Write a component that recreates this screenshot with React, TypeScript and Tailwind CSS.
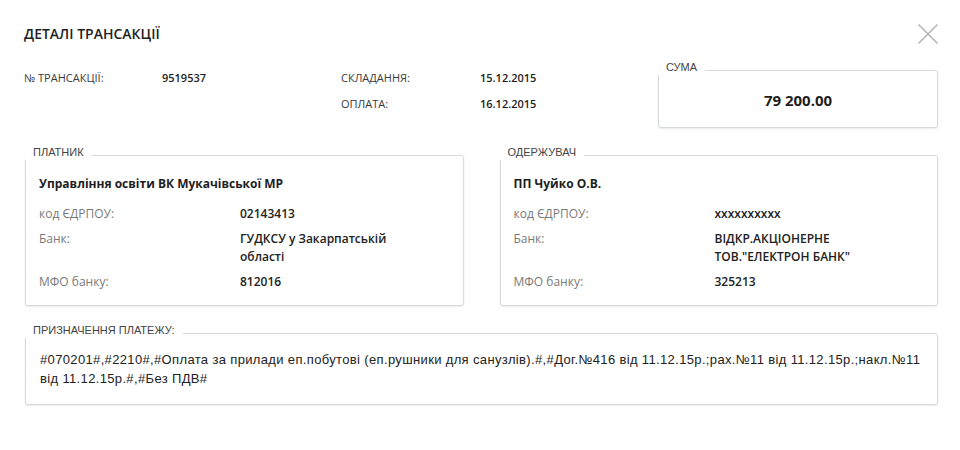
import React from "react";

const os = "font-['Open_Sans','Noto_Sans',sans-serif]";
const ar = "font-['Liberation_Sans',Arial,sans-serif]";

function Legend({ children }: { children: React.ReactNode }) {
  return (
    <div
      className={`absolute left-[-1px] top-[-12px] h-[16px] bg-white pl-[8px] pr-[8px] text-[11px] leading-[16px] text-[#444] ${ar}`}
    >
      {children}
    </div>
  );
}

function Row({ label, value }: { label: string; value: React.ReactNode }) {
  return (
    <div className="flex">
      <div className="w-[201px] shrink-0 text-[12px] leading-[18px] text-[#7a7a7a]">{label}</div>
      <div className="w-[180px] text-[12px] font-semibold leading-[18px] text-[#222]">{value}</div>
    </div>
  );
}

function Party({
  title,
  name,
  code,
  bank,
  mfo,
}: {
  title: string;
  name: string;
  code: string;
  bank: string;
  mfo: string;
}) {
  return (
    <div className="relative h-[151px] w-[439px] rounded-[3px] border border-[#d6dadd] bg-white pl-[13px] pt-[19px] shadow-[0_1px_2px_rgba(0,0,0,0.08)]">
      <Legend>{title}</Legend>
      <div className={`flex flex-col ${os}`}>
        <div className="text-[12px] font-bold leading-[18px] text-[#1e1e1e]">{name}</div>
        <div className="mt-[12px] flex flex-col gap-[7px]">
          <Row label="код ЄДРПОУ:" value={code} />
          <Row label="Банк:" value={bank} />
          <Row label="МФО банку:" value={mfo} />
        </div>
      </div>
    </div>
  );
}

export default function App() {
  return (
    <div className={`h-[450px] w-[960px] bg-white pl-[24px] pr-[22px] pt-[24px] ${os}`}>
      <div className="flex h-[20px] items-center justify-between">
        <div className="text-[14px] font-semibold leading-[20px] text-[#1f1f1f]">ДЕТАЛІ ТРАНСАКЦІЇ</div>
        <svg width="20" height="20" viewBox="0 0 20 20" className="block">
          <path d="M0.5 0.5 L19.5 19.5 M19.5 0.5 L0.5 19.5" stroke="#b0b0b0" strokeWidth="1.4" fill="none" />
        </svg>
      </div>

      <div className="mt-[24px] flex items-start">
        <div className="mt-[1px] flex w-[317px] text-[11px] leading-[18px]">
          <div className="w-[138px] text-[#3a3a3a]">№ ТРАНСАКЦІЇ:</div>
          <div className="font-semibold text-[#1e1e1e]">9519537</div>
        </div>
        <div className="mt-[1px] flex w-[317px] flex-col gap-[8px] text-[11px] leading-[18px]">
          <div className="flex">
            <div className="w-[139px] text-[#3a3a3a]">СКЛАДАННЯ:</div>
            <div className="font-semibold text-[#1e1e1e]">15.12.2015</div>
          </div>
          <div className="flex">
            <div className="w-[139px] text-[#3a3a3a]">ОПЛАТА:</div>
            <div className="font-semibold text-[#1e1e1e]">16.12.2015</div>
          </div>
        </div>
        <div className="relative mt-[2px] flex h-[58px] w-[280px] items-center justify-center rounded-[3px] border border-[#d6dadd] bg-white shadow-[0_1px_2px_rgba(0,0,0,0.08)]">
          <Legend>СУМА</Legend>
          <div className="pt-[2px] text-[15px] font-bold leading-[20px] text-[#1e1e1e]">79 200.00</div>
        </div>
      </div>

      <div className="ml-[1px] mt-[27px] flex gap-[36px]">
        <Party
          title="ПЛАТНИК"
          name="Управління освіти ВК Мукачівської МР"
          code="02143413"
          bank="ГУДКСУ у Закарпатській області"
          mfo="812016"
        />
        <Party
          title="ОДЕРЖУВАЧ"
          name="ПП Чуйко О.В."
          code="xxxxxxxxxx"
          bank={'ВІДКР.АКЦІОНЕРНЕ ТОВ."ЕЛЕКТРОН БАНК"'}
          mfo="325213"
        />
      </div>

      <div className="relative ml-[1px] mt-[27px] h-[72px] w-[913px] rounded-[3px] border border-[#d6dadd] bg-white pl-[14px] pr-[14px] pt-[16px] shadow-[0_1px_2px_rgba(0,0,0,0.08)]">
        <Legend>ПРИЗНАЧЕННЯ ПЛАТЕЖУ:</Legend>
        <div className={`text-[13px] leading-[19px] tracking-[0.35px] text-[#222] ${ar}`}>
          #070201#,#2210#,#Оплата за прилади еп.побутові (еп.рушники для санузлів).#,#Дог.№416 від 11.12.15р.;рах.№11 від 11.12.15р.;накл.№11 від 11.12.15р.#,#Без ПДВ#
        </div>
      </div>
    </div>
  );
}
